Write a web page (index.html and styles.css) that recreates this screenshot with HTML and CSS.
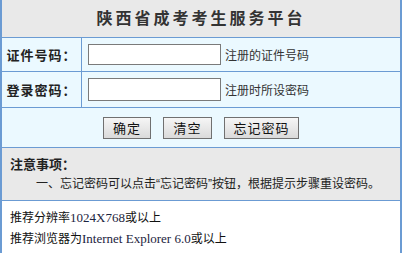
FILE: index.html
```html
<!DOCTYPE html>
<html lang="zh-CN">
<head>
    <meta charset="UTF-8">
    <title>陕西省成考考生服务平台</title>
    <link rel="stylesheet" href="styles.css">
</head>
<body>
    <div class="panel">
        <div class="title">陕西省成考考生服务平台</div>

        <div class="row row-id">
            <div class="label">证件号码：</div>
            <div class="field">
                <input type="text" class="text-input">
                <span class="hint">注册的证件号码</span>
            </div>
        </div>

        <div class="row row-pwd">
            <div class="label">登录密码：</div>
            <div class="field">
                <input type="password" class="text-input">
                <span class="hint">注册时所设密码</span>
            </div>
        </div>

        <div class="actions">
            <button class="btn btn-ok">确定</button>
            <button class="btn btn-clear">清空</button>
            <button class="btn btn-forgot">忘记密码</button>
        </div>

        <div class="notes">
            <div class="notes-title">注意事项：</div>
            <div class="notes-item">一、忘记密码可以点击“忘记密码”按钮，根据提示步骤重设密码。</div>
        </div>

        <div class="footer">
            <div>推荐分辨率<span class="en">1024X768</span>或以上</div>
            <div>推荐浏览器为<span class="en">Internet Explorer 6.0</span>或以上</div>
        </div>
    </div>
</body>
</html>
```

FILE: styles.css
```css
body {
    margin: 0;
    background-color: #fff;
    font-family: "Noto Sans CJK SC", sans-serif;
    font-size: 12px;
    color: #222;
}
.panel {
    width: 398px;
    border-left: 2px solid #6b9bd3;
    border-right: 2px solid #6b9bd3;
}
.title {
    height: 37px;
    line-height: 35px;
    text-align: center;
    background-color: #e9e9e9;
    border-bottom: 1px solid #6b9bd3;
    font-size: 16px;
    font-weight: bold;
    letter-spacing: 3px;
    color: #333;
}
.row {
    display: flex;
    background-color: #ebf9ff;
    border-bottom: 1px solid #6b9bd3;
}
.row-id {
    height: 33px;
}
.row-pwd {
    height: 35px;
}
.label {
    width: 79px;
    border-right: 1px solid #6b9bd3;
    display: flex;
    align-items: center;
    justify-content: center;
    font-size: 13px;
    font-weight: bold;
    color: #222;
    letter-spacing: 1px;
}
.field {
    display: flex;
    align-items: center;
    padding-left: 6px;
}
.text-input {
    width: 133px;
    height: 21px;
    box-sizing: border-box;
    border: 1px solid #7a7a7a;
    background-color: #fff;
    padding: 0 2px;
    margin: 0;
}
.row-pwd .text-input {
    height: 23px;
}
.hint {
    margin-left: 4px;
    color: #333;
}
.actions {
    height: 39px;
    display: flex;
    align-items: center;
    justify-content: center;
    gap: 12px;
    background-color: #ebf9ff;
    border-bottom: 1px solid #6b9bd3;
}
.btn {
    height: 22px;
    padding: 0;
    border: 1px solid #707070;
    background: linear-gradient(#f6f6f6, #dadada);
    font-family: "Noto Sans CJK SC", sans-serif;
    font-size: 13px;
    color: #111;
    letter-spacing: 1px;
}
.btn-ok {
    width: 48px;
}
.btn-clear {
    width: 49px;
}
.btn-forgot {
    width: 75px;
}
.notes {
    background-color: #e9e9e9;
    border-bottom: 1px solid #6b9bd3;
    padding: 6px 8px;
    line-height: 20px;
}
.notes-title {
    font-size: 13px;
    font-weight: bold;
    color: #222;
}
.notes-item {
    text-indent: 26px;
    white-space: nowrap;
    font-family: "Liberation Sans", "Noto Sans CJK SC", sans-serif;
    color: #222;
}
.footer {
    background-color: #fff;
    padding: 6px 8px 5px;
    line-height: 20px;
    font-size: 12px;
    color: #111;
}
.footer .en {
    font-family: "Liberation Serif", serif;
    font-size: 13px;
    color: #1c2440;
}
```
